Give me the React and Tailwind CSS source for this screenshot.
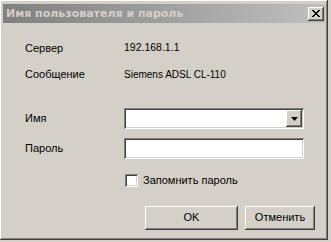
import React, { useState } from "react";

const raised =
  "shadow-[inset_-1px_-1px_#404040,inset_1px_1px_#ffffff,inset_-2px_-2px_#808080,inset_2px_2px_#d4d0c8]";
const sunken =
  "shadow-[inset_1px_1px_#808080,inset_-1px_-1px_#ffffff,inset_2px_2px_#404040,inset_-2px_-2px_#d4d0c8]";

function App() {
  const [remember, setRemember] = useState(false);

  return (
    <div className="w-[331px] h-[242px] bg-[#d4d0c8] font-['Liberation_Sans',Arial,sans-serif] text-[11px] text-black">
      {/* Window */}
      <div className={`w-[328px] h-[240px] bg-[#d4d0c8] pt-[4px] px-[3px] ${raised}`}>
        {/* Title bar */}
        <div className="h-[19px] flex items-center justify-between pl-[3px] pr-[1px] bg-gradient-to-r from-[#808080] to-[#c0c0c0]">
          <span className="font-['DejaVu_Sans',sans-serif] font-bold text-[#d4d0c8] text-[11px] leading-none">
            Имя пользователя и пароль
          </span>
          <button className={`w-[16px] h-[14px] bg-[#d4d0c8] flex items-center justify-center ${raised}`}>
            <svg width="8" height="7" viewBox="0 0 8 7">
              <path d="M0 0h2v1h-2zM6 0h2v1h-2zM1 1h2v1h-2zM5 1h2v1h-2zM2 2h4v1h-4zM3 3h2v1h-2zM2 4h4v1h-4zM1 5h2v1h-2zM5 5h2v1h-2zM0 6h2v1h-2zM6 6h2v1h-2z" fill="#000" />
            </svg>
          </button>
        </div>

        {/* Content */}
        <div className="pl-[22px]">
          <div className="mt-[18px] flex h-[14px] items-center">
            <span className="w-[99px]">Сервер</span>
            <span className="text-[10.5px]">192.168.1.1</span>
          </div>
          <div className="mt-[12px] flex h-[14px] items-center">
            <span className="w-[99px]">Сообщение</span>
            <span className="text-[10px]">Siemens ADSL CL-110</span>
          </div>

          <div className="mt-[27px] flex items-center">
            <span className="w-[99px]">Имя</span>
            <div className={`w-[180px] h-[21px] bg-white flex justify-end p-[2px] ${sunken}`}>
              <div className={`w-[16px] h-[17px] bg-[#d4d0c8] flex items-center justify-center ${raised}`}>
                <svg width="7" height="4" viewBox="0 0 7 4">
                  <path d="M0 0h7L3.5 4z" fill="#000" />
                </svg>
              </div>
            </div>
          </div>
          <div className="mt-[9px] flex items-center">
            <span className="w-[99px]">Пароль</span>
            <input
              type="password"
              className={`w-[180px] h-[21px] bg-white outline-none px-[3px] ${sunken}`}
            />
          </div>

          <label className="mt-[13px] ml-[100px] flex items-center gap-[5px]">
            <span
              onClick={() => setRemember(!remember)}
              className={`w-[13px] h-[13px] bg-white ${sunken}`}
            />
            <span>Запомнить пароль</span>
          </label>

          <div className="mt-[17px] ml-[120px] flex gap-[7px]">
            <button className={`w-[93px] h-[24px] bg-[#d4d0c8] ${raised}`}>OK</button>
            <button className={`w-[70px] h-[24px] bg-[#d4d0c8] ${raised}`}>Отменить</button>
          </div>
        </div>
      </div>
    </div>
  );
}

export default App;
